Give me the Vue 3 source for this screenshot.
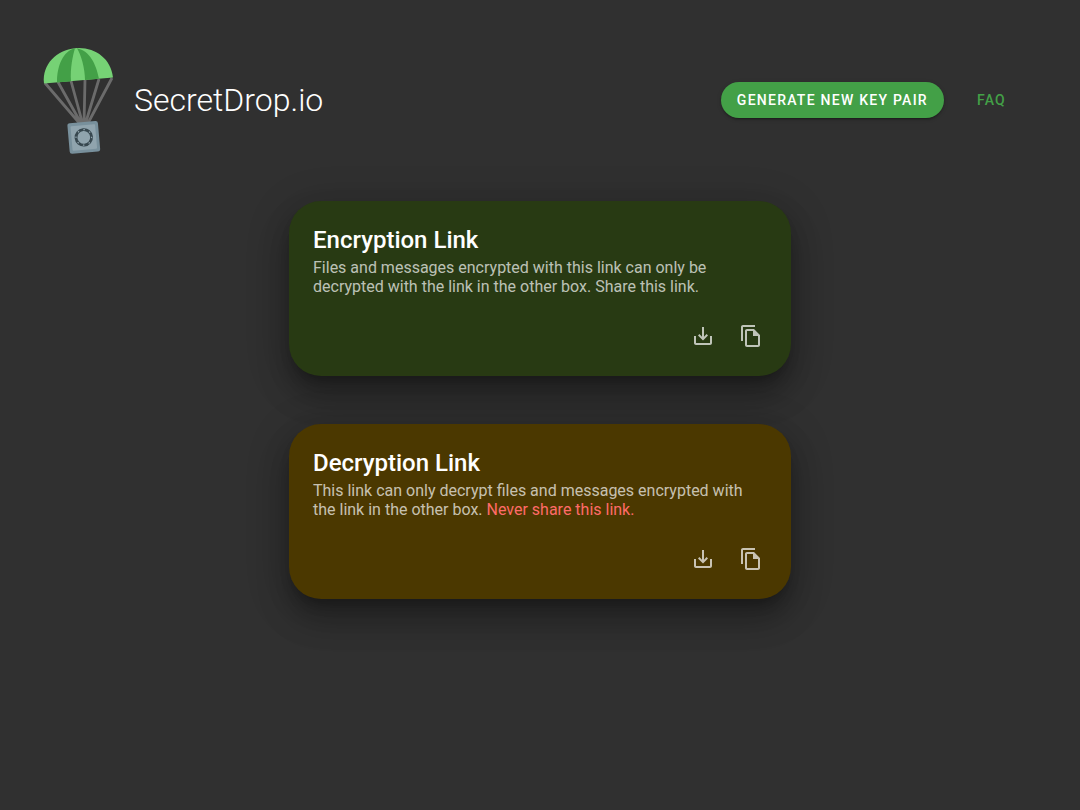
<script setup>
const cards = [
  { id: 'encryption', title: 'Encryption Link', text: 'Files and messages encrypted with this link can only be decrypted with the link in the other box. Share this link.', warning: '' },
  { id: 'decryption', title: 'Decryption Link', text: 'This link can only decrypt files and messages encrypted with the link in the other box. ', warning: 'Never share this link.' },
]
</script>

<template>
  <div class="page">
    <header class="header">
      <a class="brand" href="#">
        <svg class="logo" viewBox="0 0 74 108" aria-hidden="true">
          <g fill="none" stroke="#6b6b6b" stroke-width="2.8">
            <path d="M3 37L39 79M16 36L40 79M29 35L41 79M43 34L42 79M57 33L43 79M70 32L45 79" />
          </g>
          <path fill="#76d275" d="M2 37.500C0 18 15 4 33 2.300C52 0.500 69 12 71 31.500Z" />
          <path fill="#43a047" d="M15 36.400C15 20 21 5 33 2.300C31 9 28 22 29 35.200Z" />
          <path fill="#43a047" d="M35 2.300C39 9 43 22 43 34L57 32.700C54 18 48 5 35 2.300Z" />
          <g transform="rotate(-5 41.800 91.400)">
            <rect x="26.500" y="76.100" width="30.600" height="30.600" rx="2.500" fill="#78909c" />
            <rect x="29.500" y="79.100" width="24.600" height="24.600" rx="1" fill="#90a4ae" />
            <circle cx="41.800" cy="91.400" r="7.800" fill="none" stroke="#37474f" stroke-width="2.800" />
            <circle cx="41.800" cy="91.400" r="7.800" fill="none" stroke="#90a4ae" stroke-width="1.200" stroke-dasharray="1.500 4.626" />
          </g>
        </svg>
        <span class="name">SecretDrop.io</span>
      </a>
      <nav class="nav">
        <button class="generate" type="button">Generate new key pair</button>
        <a class="faq" href="#faq">FAQ</a>
      </nav>
    </header>
    <main class="cards">
      <section v-for="card in cards" :key="card.id" class="card" :class="card.id">
        <h2>{{ card.title }}</h2>
        <p>{{ card.text }}<span v-if="card.warning" class="warning">{{ card.warning }}</span></p>
        <div class="actions">
          <button type="button" :aria-label="'Download ' + card.title">
            <svg viewBox="0 0 24 24"><path d="M19 12v7H5v-7H3v7c0 1.100.9 2 2 2h14c1.100 0 2-.9 2-2v-7h-2zm-6 .67l2.590-2.580L17 11.500l-5 5-5-5 1.410-1.410L11 12.670V3h2z" /></svg>
          </button>
          <button type="button" :aria-label="'Copy ' + card.title">
            <svg viewBox="0 0 24 24"><path d="M16 1H4c-1.100 0-2 .9-2 2v14h2V3h12V1zm-1 4H8c-1.100 0-1.990.9-1.990 2L6 21c0 1.100.89 2 1.990 2H19c1.100 0 2-.9 2-2V11l-6-6zM8 21V7h6v5h5v9H8z" /></svg>
          </button>
        </div>
      </section>
    </main>
  </div>
</template>

<style>
body {
  background: #303030;
}
</style>

<style scoped>
.page {
  box-sizing: border-box;
  min-height: 100vh;
  padding: 46px 42px 48px;
  background: #303030;
  color: #fff;
  font-family: Roboto, sans-serif;
}
.header {
  display: flex;
  align-items: center;
  justify-content: space-between;
}
.brand {
  display: flex;
  align-items: center;
  gap: 18px;
  color: #fff;
  text-decoration: none;
}
.logo {
  width: 74px;
  height: 108px;
}
.name {
  font-size: 32px;
  line-height: 38px;
  font-weight: 300;
}
.nav {
  display: flex;
  align-items: center;
  gap: 17px;
  padding-right: 16px;
}
.generate,
.faq {
  height: 36px;
  padding: 0 16px;
  border: 0;
  border-radius: 18px;
  font-family: inherit;
  font-size: 14px;
  line-height: 36px;
  font-weight: 500;
  letter-spacing: 1.25px;
  text-transform: uppercase;
  text-decoration: none;
}
.generate {
  background: #43a047;
  color: #fff;
  box-shadow: 0 3px 1px -2px rgba(0, 0, 0, 0.2), 0 2px 2px rgba(0, 0, 0, 0.14), 0 1px 5px rgba(0, 0, 0, 0.12);
}
.faq {
  color: #43a047;
}
.cards {
  display: flex;
  flex-direction: column;
  gap: 48px;
  max-width: 502px;
  margin: 47px auto 0;
}
.card {
  padding: 24px 16px 16px 24px;
  border-radius: 32px;
  box-shadow: 0 10px 13px -6px rgba(0, 0, 0, 0.28), 0 20px 31px 3px rgba(0, 0, 0, 0.2), 0 8px 38px 7px rgba(0, 0, 0, 0.16);
}
.encryption {
  background: #283a13;
}
.decryption {
  background: #4b3800;
}
h2 {
  margin: 0 0 2px;
  font-size: 24px;
  line-height: 31px;
  font-weight: 500;
}
p {
  margin: 0 8px 16px 0;
  font-size: 16px;
  line-height: 19px;
  color: rgba(255, 255, 255, 0.7);
}
.warning {
  color: #ff6b68;
}
.actions {
  display: flex;
  justify-content: flex-end;
}
.actions button {
  width: 48px;
  height: 48px;
  padding: 12px;
  border: 0;
  background: none;
  color: rgba(255, 255, 255, 0.7);
}
.actions svg {
  display: block;
  width: 24px;
  height: 24px;
  fill: currentColor;
}
</style>
